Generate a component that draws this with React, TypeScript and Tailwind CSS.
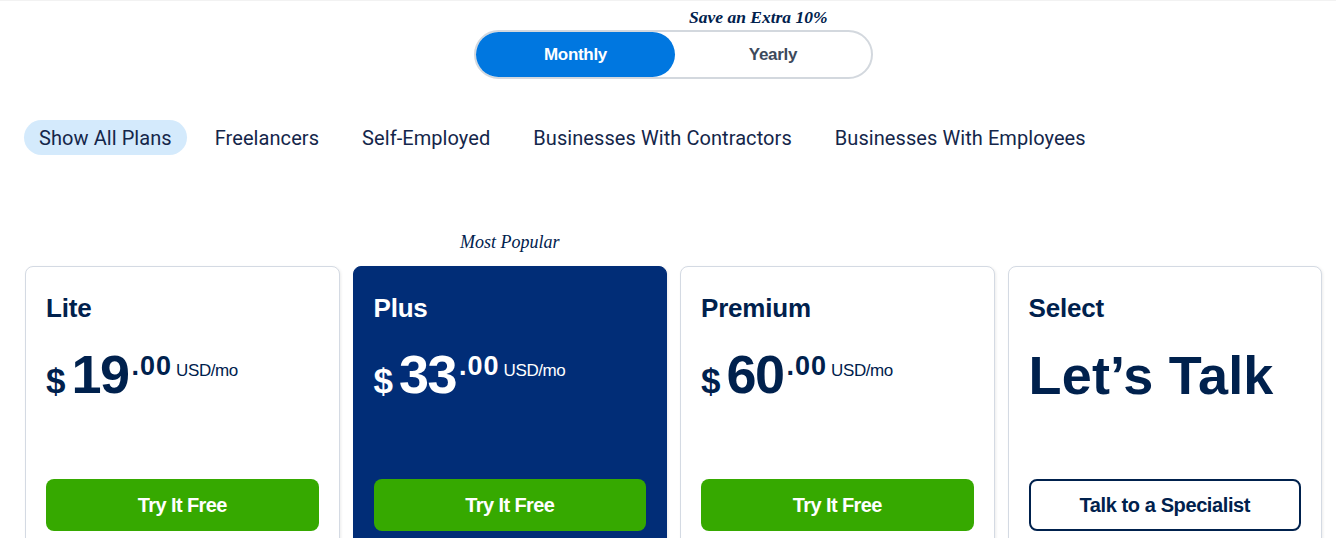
import React from "react";

const navy = "text-[#00214d]";

function Price({ amount, dark }: { amount: string; dark?: boolean }) {
  const c = dark ? "text-white" : "text-[#00214d]";
  return (
    <div className={`flex items-baseline ${c} font-['Liberation_Sans',sans-serif] mt-[22px] h-[60px] pt-[2px]`}>
      <span className="text-[35px] font-bold leading-[54px] mr-[6px]">$</span>
      <span className="text-[54px] font-bold leading-[54px] tracking-[-1.5px]">{amount}</span>
      <span className="relative -top-[18px] text-[27px] font-bold leading-none ml-[3px] tracking-[1px]">.00</span>
      <span className="relative -top-[17px] text-[17px] leading-none ml-[4px] tracking-[-0.4px]">USD/mo</span>
    </div>
  );
}

function Card({
  title,
  amount,
  dark,
  talk,
}: {
  title: string;
  amount?: string;
  dark?: boolean;
  talk?: boolean;
}) {
  return (
    <div
      className={`h-[300px] rounded-[8px] px-[20px] pt-[26px] flex flex-col shadow-[1px_1px_3px_rgba(0,0,0,0.08)] ${
        dark ? "bg-[#012d77] border border-[#012d77]" : "bg-white border border-[#d4dae3]"
      }`}
    >
      <div
        className={`h-[30px] text-[26px] font-bold leading-[30px] tracking-[-0.2px] font-['Liberation_Sans',sans-serif] ${
          dark ? "text-white" : navy
        }`}
      >
        {title}
      </div>
      {talk ? (
        <div className={`mt-[22px] h-[60px] text-[54px] font-bold leading-[60px] tracking-[0.2px] whitespace-nowrap ${navy} font-['Liberation_Sans',sans-serif]`}>
          Let’s Talk
        </div>
      ) : (
        <Price amount={amount || ""} dark={dark} />
      )}
      <div className="mt-[74px]">
        {talk ? (
          <button className="w-full h-[52px] rounded-[8px] border-2 border-[#00214d] bg-white text-[#00214d] text-[20px] font-bold tracking-[-0.4px] font-['Liberation_Sans',sans-serif]">
            Talk to a Specialist
          </button>
        ) : (
          <button className="w-full h-[52px] rounded-[8px] bg-[#36a900] text-white text-[20px] font-bold tracking-[-0.6px] font-['Liberation_Sans',sans-serif]">
            Try It Free
          </button>
        )}
      </div>
    </div>
  );
}

export default function App() {
  const tabs = [
    "Show All Plans",
    "Freelancers",
    "Self-Employed",
    "Businesses With Contractors",
    "Businesses With Employees",
  ];
  return (
    <div className="w-[1336px] h-[538px] overflow-hidden bg-white border-t border-[#f2f2f2]">
      <div className="pl-[25px] pr-[14px]">
        <div className="flex flex-col items-center">
          <div className="w-[399px] pt-[5px]">
            <div className="pl-[215px] h-[24px] text-[17.5px] leading-[22px] italic font-bold text-[#00214d] font-['Liberation_Serif',serif] whitespace-nowrap">
              Save an Extra 10%
            </div>
            <div className="h-[49px] rounded-full border-2 border-[#d3d8de] flex items-stretch">
              <div className="w-[199px] rounded-full bg-[#0077e0] text-white text-[17px] font-bold flex items-center justify-center font-['Liberation_Sans',sans-serif] tracking-[-0.3px]">
                Monthly
              </div>
              <div className="flex-1 text-[#3d4a5c] text-[17px] font-bold flex items-center justify-center font-['Liberation_Sans',sans-serif] tracking-[-0.3px]">
                Yearly
              </div>
            </div>
          </div>
        </div>

        <div className="mt-[41px] flex gap-[13px] -ml-[1px]">
          {tabs.map((t, i) => (
            <div
              key={t}
              className={`h-[35px] px-[15px] rounded-full flex items-center text-[20px] tracking-[0.07px] text-[#14264a] font-['Roboto',sans-serif] whitespace-nowrap ${
                i === 0 ? "bg-[#d4eafc]" : ""
              }`}
            >
              {t}
            </div>
          ))}
        </div>

        <div className="mt-[76px] grid grid-cols-4 gap-[13px]">
          <div className="col-start-2 text-center h-[24px] text-[18px] leading-[22px] italic text-[#00214d] font-['Liberation_Serif',serif]">
            Most Popular
          </div>
        </div>
        <div className="mt-[11px] grid grid-cols-4 gap-[13px]">
          <Card title="Lite" amount="19" />
          <Card title="Plus" amount="33" dark />
          <Card title="Premium" amount="60" />
          <Card title="Select" talk />
        </div>
      </div>
    </div>
  );
}
